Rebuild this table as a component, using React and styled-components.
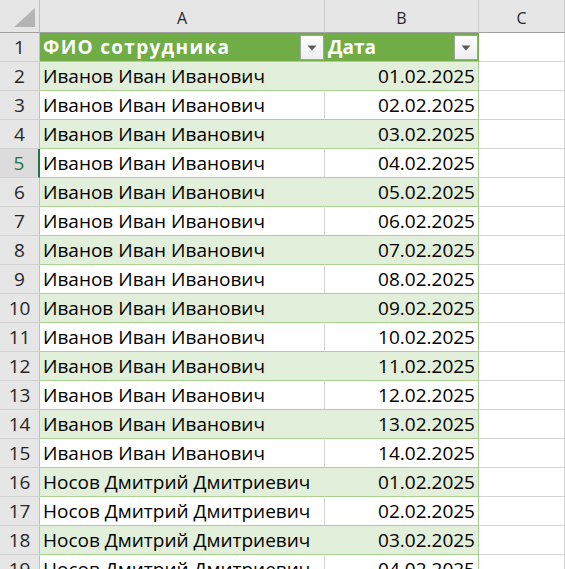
import React from 'react'
import styled, { createGlobalStyle } from 'styled-components'

const GlobalStyle = createGlobalStyle`
    html, body {
        margin:0;
        padding:0;
        background:#fff;
        overflow:hidden;
    }
    body {
        font-family:"Open Sans", "Noto Sans", sans-serif;
    }
`

const rows = [
    ...Array.from({ length: 14 }, (_, i) => ({
        name: 'Иванов Иван Иванович',
        date: `${String(i + 1).padStart(2, '0')}.02.2025`,
    })),
    ...Array.from({ length: 4 }, (_, i) => ({
        name: 'Носов Дмитрий Дмитриевич',
        date: `${String(i + 1).padStart(2, '0')}.02.2025`,
    })),
]

const ACTIVE_ROW = 5

function FilterButton() {
    return (
        <FilterBtn>
            <svg width="10" height="6" viewBox="0 0 10 6">
                <path d="M0.5 0.5 L9.5 0.5 L5 5.5 Z" fill="#5a5a5a" />
            </svg>
        </FilterBtn>
    )
}

function App() {
    return (
        <>
            <GlobalStyle />
            <Sheet>
                <HeaderRow>
                    <Corner>
                        <svg width="22" height="20" viewBox="0 0 22 20">
                            <path d="M21 0 L21 19 L0 19 Z" fill="#b4b4b4" />
                        </svg>
                    </Corner>
                    <ColHead>A</ColHead>
                    <ColHead>B</ColHead>
                    <ColHead>C</ColHead>
                </HeaderRow>

                <Row>
                    <RowHead>1</RowHead>
                    <TableHead>
                        <HeadText spread>ФИО сотрудника</HeadText>
                        <FilterButton />
                    </TableHead>
                    <TableHead>
                        <HeadText>Дата</HeadText>
                        <FilterButton />
                    </TableHead>
                    <Blank />
                </Row>

                {rows.map((r, i) => {
                    const num = i + 2
                    const banded = i % 2 === 0
                    return (
                        <Row key={num}>
                            <RowHead active={num === ACTIVE_ROW}>{num}</RowHead>
                            <NameCell banded={banded}>{r.name}</NameCell>
                            <DateCell banded={banded}>{r.date}</DateCell>
                            <Blank />
                        </Row>
                    )
                })}
            </Sheet>
        </>
    )
}

export default App

const columns = '40px 285px 154px 1fr'

const Sheet = styled.div`
    width:565px;
    height:569px;
    overflow:hidden;
    display:flex;
    flex-direction:column;
    font-size:19px;
    color:#000;
`
const HeaderRow = styled.div`
    display:grid;
    grid-template-columns:${columns};
    height:33px;
    flex-shrink:0;
`
const Corner = styled.div`
    background:#e6e6e6;
    border-right:1px solid #c0c0c0;
    border-bottom:1px solid #a0a0a0;
    box-sizing:border-box;
    display:flex;
    align-items:flex-end;
    justify-content:flex-end;
    padding:0 3px 4px 0;
`
const ColHead = styled.div`
    background:#e6e6e6;
    border-right:1px solid #cbcbcb;
    border-bottom:1px solid #a0a0a0;
    box-sizing:border-box;
    font-size:16px;
    color:#262626;
    display:flex;
    align-items:center;
    justify-content:center;
    padding-top:3px;
`
const Row = styled.div`
    display:grid;
    grid-template-columns:${columns};
    height:29px;
    flex-shrink:0;
    line-height:28px;
`
const RowHead = styled.div`
    background:${props => props.active ? '#dcdcdc' : '#e6e6e6'};
    color:${props => props.active ? '#217346' : '#262626'};
    border-right:${props => props.active ? '2px solid #217346' : '1px solid #c0c0c0'};
    border-bottom:1px solid #d2d2d2;
    box-sizing:border-box;
    text-align:center;
`
const Cell = styled.div`
    box-sizing:border-box;
    border-bottom:1px solid #a9d08e;
    padding:0 3px;
    white-space:nowrap;
    overflow:hidden;
`
const TableHead = styled(Cell)`
    background:#70ad47;
    color:#fff;
    font-weight:700;
    border-right:1px solid #70ad47;
    display:flex;
    align-items:center;
    justify-content:space-between;
    padding-right:0;
`
const HeadText = styled.span`
    letter-spacing:${props => props.spread ? '1.3px' : '0'};
`
const FilterBtn = styled.div`
    width:24px;
    height:25px;
    box-sizing:border-box;
    border:1px solid #a3a3a3;
    background:linear-gradient(#fefefe, #eeeef2);
    display:flex;
    align-items:center;
    justify-content:center;
    margin-top:1px;
`
const NameCell = styled(Cell)`
    background:${props => props.banded ? '#e2efda' : '#fff'};
    border-right:1px solid ${props => props.banded ? '#e2efda' : '#d4d4d4'};
`
const DateCell = styled(Cell)`
    background:${props => props.banded ? '#e2efda' : '#fff'};
    border-right:1px solid #a9d08e;
    text-align:right;
`
const Blank = styled.div`
    background:#fff;
    border-right:1px solid #d4d4d4;
    border-bottom:1px solid #d4d4d4;
    box-sizing:border-box;
`
